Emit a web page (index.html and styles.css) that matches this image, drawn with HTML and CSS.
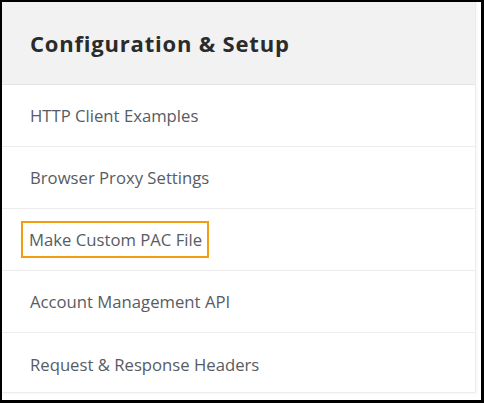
FILE: index.html
```html
<!DOCTYPE html>
<html>
<head>
<meta charset="utf-8">
<link rel="stylesheet" href="styles.css">
</head>
<body>
<div class="frame">
  <div class="card">
    <div class="card-header"><h2 class="title">Configuration &amp; Setup</h2></div>
    <ul class="menu">
      <li class="item"><a class="link">HTTP Client Examples</a></li>
      <li class="item"><a class="link">Browser Proxy Settings</a></li>
      <li class="item"><a class="link focused">Make Custom PAC File</a></li>
      <li class="item"><a class="link">Account Management API</a></li>
      <li class="item"><a class="link">Request &amp; Response Headers</a></li>
    </ul>
  </div>
</div>
</body>
</html>
```
FILE: styles.css
```css
html, body { margin: 0; padding: 0; background: #000; height: 100%; }
body { font-family: "Open Sans", "Liberation Sans", sans-serif; }
.frame {
  box-sizing: border-box;
  height: 398px;
  width: 479px;
  margin: 2px 0 0 2px;
  background: #fff;
  padding: 0 5px 7px 0;
}
.card {
  background: #fff;
  border-right: 1px solid #ececec;
  border-bottom: 1px solid #ececec;
  box-shadow: 1px 1px 2px rgba(0,0,0,0.04);
  height: 100%;
  box-sizing: border-box;
}
.card-header {
  background: #f2f2f2;
  height: 83px;
  border-bottom: 1px solid #e4e4e4;
  display: flex;
  align-items: center;
  padding-left: 28px;
  box-sizing: border-box;
}
.title {
  margin: 0;
  font-size: 22px;
  font-weight: 700;
  letter-spacing: 0.8px;
  color: #2b2b2b;
}
.menu { list-style: none; margin: 0; padding: 0; }
.item {
  height: 62px;
  border-bottom: 1px solid #ededed;
  display: flex;
  align-items: center;
  padding-left: 28px;
  box-sizing: border-box;
}
.item:last-child { border-bottom: none; }
.link {
  font-size: 16.7px;
  color: #575c63;
}
.focused {
  outline: 2px solid #f59b0f;
  outline-offset: 0;
  padding: 5px 5px 5px 6px;
  margin-left: -7px;
}
```
